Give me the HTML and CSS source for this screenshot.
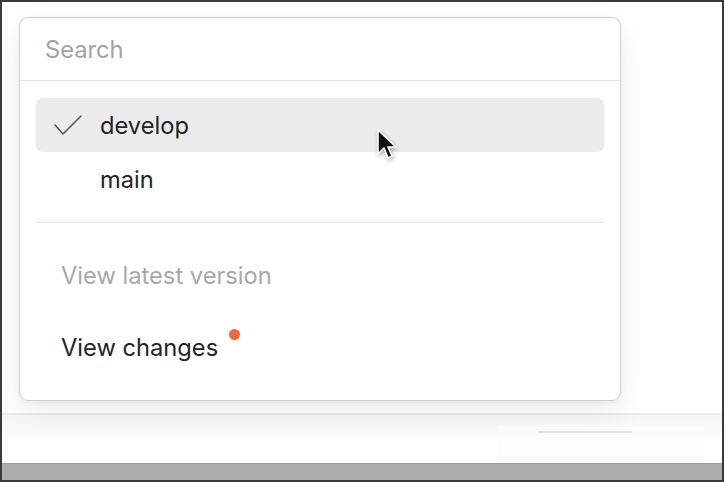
FILE: index.html
```html
<!DOCTYPE html>
<html>
<head>
<meta charset="utf-8">
<link rel="stylesheet" href="styles.css">
</head>
<body>
<div class="frame">
  <div class="stage">
    <div class="menu">
      <div class="search">Search</div>
      <div class="branches">
        <div class="item active">
          <svg class="check" width="28" height="22" viewBox="0 0 28 22"><path d="M1 11 L9 20 L27 2" fill="none" stroke="#5a5a5a" stroke-width="1.6" stroke-linecap="round" stroke-linejoin="round"/></svg>
          <span>develop</span>
        </div>
        <div class="item"><span>main</span></div>
      </div>
      <div class="sep"></div>
      <div class="actions">
        <div class="action muted">View latest version</div>
        <div class="action">View changes<span class="dot"></span></div>
      </div>
    </div>
    <svg class="cursor" width="22" height="34" viewBox="0 0 22 34"><path d="M2 2 L2 26 L8 20 L12 30 L16 28 L12 19 L20 19 Z" fill="#111" stroke="#fff" stroke-width="1.6" stroke-linejoin="round"/></svg>
  </div>
  <div class="footer">
    <div class="ghost"><div class="ghost-line"></div></div>
  </div>
  <div class="band"></div>
</div>
</body>
</html>
```
FILE: styles.css
```css
* { box-sizing: border-box; }
html, body { margin: 0; padding: 0; background: #fff; }
body { font-family: Inter, "Noto Sans", sans-serif; }
.frame {
  width: 724px; height: 482px;
  border: 2px solid #3a3a3a;
  display: flex; flex-direction: column;
  background: #fff;
  overflow: hidden;
}
.stage {
  position: relative;
  height: 413px;
  padding: 15px 0 0 17px;
  border-bottom: 2px solid #ececec;
}
.menu {
  width: 602px; height: 384px;
  border: 1px solid #cfcfcf;
  border-radius: 9px;
  background: #fff;
  box-shadow: 0 12px 30px rgba(0,0,0,0.07), 0 2px 6px rgba(0,0,0,0.04);
  position: relative; z-index: 1;
}
.search {
  height: 63px;
  border-bottom: 1px solid #e2e2e2;
  padding: 18px 0 0 25px;
  font-size: 23.7px;
  color: #a3a3a3;
  line-height: 28px;
}
.branches { padding: 17px 16px 0 16px; }
.item {
  height: 54px;
  display: flex; align-items: center;
  padding-left: 64px;
  font-size: 23.7px; color: #242424;
  border-radius: 7px;
  position: relative;
}
.item.active { background: #ececec; }
.check { position: absolute; left: 18px; top: 16px; }
.sep { margin: 16px 16px 0 16px; height: 1px; background: #e4e4e4; }
.actions { padding: 25px 16px 0 16px; }
.action {
  height: 54px;
  display: flex; align-items: center;
  padding-left: 25px;
  font-size: 23.7px; color: #242424;
  margin-bottom: 18px;
}
.action.muted { color: #a8a8a8; }
.dot {
  width: 11px; height: 11px; border-radius: 50%;
  background: #f2693a;
  align-self: flex-start;
  margin: 9px 0 0 11px;
}
.cursor { position: absolute; left: 374px; top: 126px; z-index: 2; filter: drop-shadow(1px 2px 2px rgba(0,0,0,0.3)); }
.footer {
  flex: 1;
  background: linear-gradient(#f6f6f6, #fff 60%);
  position: relative;
}
.ghost {
  position: absolute; left: 496px; top: 10px; width: 206px; height: 34px;
  background: rgba(252,252,252,0.7);
}
.ghost-line { margin: 6px 0 0 40px; width: 94px; height: 2px; background: #e6e6e6; }
.band { height: 17px; background: #acacac; border-top: 1px solid #9d9d9d; }
```
